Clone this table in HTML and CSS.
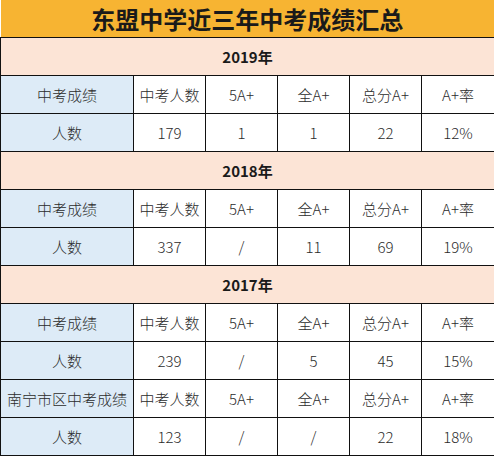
FILE: index.html
```html
<!DOCTYPE html>
<html lang="zh">
<head>
<meta charset="utf-8">
<title>东盟中学近三年中考成绩汇总</title>
<link rel="stylesheet" href="styles.css">
</head>
<body>
<table class="sheet">
  <colgroup>
    <col class="c-first">
    <col class="c-data"><col class="c-data"><col class="c-data"><col class="c-data"><col class="c-last">
  </colgroup>
  <tbody>
    <tr><td class="title" colspan="6">东盟中学近三年中考成绩汇总</td></tr>
    <tr><td class="year" colspan="6">2019年</td></tr>
    <tr><td class="label">中考成绩</td><td>中考人数</td><td>5A+</td><td>全A+</td><td>总分A+</td><td>A+率</td></tr>
    <tr><td class="label">人数</td><td class="num">179</td><td class="num">1</td><td class="num">1</td><td class="num">22</td><td class="num">12%</td></tr>
    <tr><td class="year" colspan="6">2018年</td></tr>
    <tr><td class="label">中考成绩</td><td>中考人数</td><td>5A+</td><td>全A+</td><td>总分A+</td><td>A+率</td></tr>
    <tr><td class="label">人数</td><td class="num">337</td><td class="num">/</td><td class="num">11</td><td class="num">69</td><td class="num">19%</td></tr>
    <tr><td class="year" colspan="6">2017年</td></tr>
    <tr><td class="label">中考成绩</td><td>中考人数</td><td>5A+</td><td>全A+</td><td>总分A+</td><td>A+率</td></tr>
    <tr><td class="label">人数</td><td class="num">239</td><td class="num">/</td><td class="num">5</td><td class="num">45</td><td class="num">15%</td></tr>
    <tr><td class="label">南宁市区中考成绩</td><td>中考人数</td><td>5A+</td><td>全A+</td><td>总分A+</td><td>A+率</td></tr>
    <tr><td class="label">人数</td><td class="num">123</td><td class="num">/</td><td class="num">/</td><td class="num">22</td><td class="num">18%</td></tr>
  </tbody>
</table>
</body>
</html>
```
FILE: styles.css
```css
html, body {
  margin: 0;
  padding: 0;
  background: #ffffff;
}
body {
  font-family: "Noto Sans CJK SC", "Noto Sans", sans-serif;
  color: #2b2b2b;
}
.sheet {
  border-collapse: collapse;
  table-layout: fixed;
  width: 494px;
}
.c-first { width: 133px; }
.c-data { width: 72px; }
.c-last { width: 73px; }
.sheet td {
  border: 1px solid #111;
  height: 37px;
  padding: 0;
  text-align: center;
  vertical-align: middle;
  font-size: 15px;
  font-weight: 300;
  line-height: 18px;
  white-space: nowrap;
}
.sheet td.title {
  background: #f7b432;
  font-size: 24px;
  font-weight: bold;
  color: #1a1a1a;
  border-top: none;
  border-left: none;
}
.sheet td.year {
  background: #fce4d6;
  font-weight: bold;
  font-size: 15px;
  color: #1a1a1a;
}
.sheet td.label {
  background: #ddebf7;
}
.sheet td.num {
  font-family: "Noto Sans CJK SC", "Noto Sans", sans-serif;
  font-weight: 300;
}
```
